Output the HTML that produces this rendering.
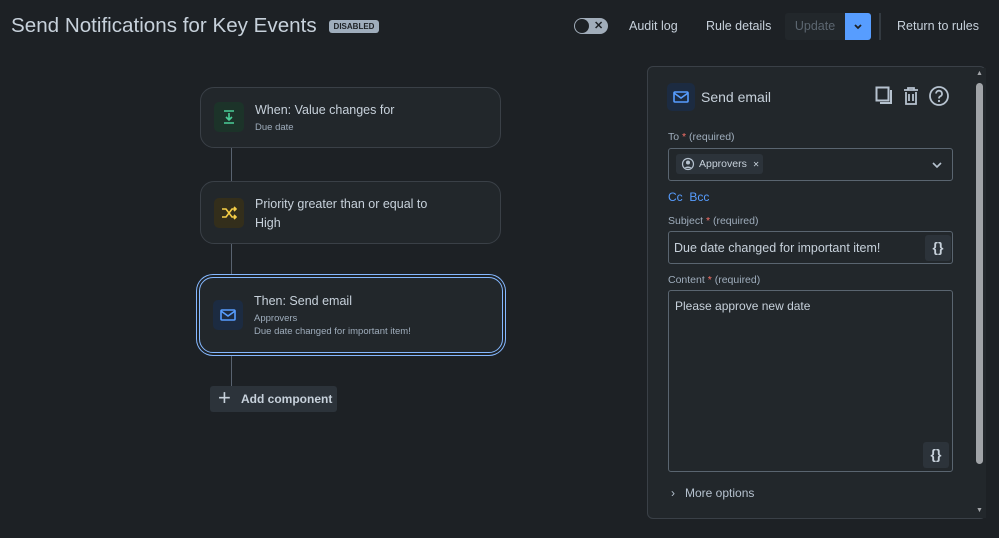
<!DOCTYPE html><html><head><style>
*{box-sizing:border-box;margin:0;padding:0}
body{width:999px;height:538px;background:#1d2125;font-family:"Liberation Sans",sans-serif;color:#b6c2cf;position:relative;overflow:hidden}
.a{position:absolute;white-space:nowrap}
.card{position:absolute;left:200px;width:301px;border:1px solid #3a4047;border-radius:14px;background:#22272b}
.ic{position:absolute;left:13px;width:30px;height:30px;border-radius:5px}
.t{position:absolute;left:54px;font-size:12.5px;color:#c7d1db;white-space:nowrap}
.s{position:absolute;left:54px;font-size:9.5px;color:#9fadbc;white-space:nowrap}
.lbl{position:absolute;left:668px;font-size:10.5px;color:#9fadbc}
.lbl b{color:#f87168;font-weight:normal}
.lbl span{color:#9fadbc}
.box{position:absolute;left:668px;width:285px;border:1px solid #5a6570;border-radius:3px;background:#22272b}
.br{position:absolute;width:26px;height:26px;background:#2c333a;border-radius:3px;color:#c7d1db;font-size:14px;text-align:center;line-height:25px;font-weight:bold}
</style></head><body>
<div class="a" style="left:11px;top:14px;font-size:20.6px;color:#c7d1db">Send Notifications for Key Events</div>
<div class="a" style="left:329px;top:20px;width:50px;height:13px;background:#9fadbc;border-radius:3px;color:#1d2125;font-size:8px;font-weight:bold;text-align:center;line-height:13px">DISABLED</div>
<div class="a" style="left:574px;top:18px;width:34px;height:16px;border-radius:8px;background:#a1adba"><div class="a" style="left:1px;top:1px;width:14px;height:14px;border-radius:7px;background:#1d2125"></div><div class="a" style="left:20px;top:0;font-size:11px;color:#1d2125;font-weight:bold;line-height:16px">✕</div></div>
<div class="a" style="left:629px;top:19px;font-size:12.5px;color:#c7d1db">Audit log</div>
<div class="a" style="left:706px;top:19px;font-size:12.5px;color:#c7d1db">Rule details</div>
<div class="a" style="left:785px;top:13px;width:60px;height:27px;background:#22272b;border-radius:3px 0 0 3px;color:#5c6670;font-size:12.5px;text-align:center;line-height:27px">Update</div>
<div class="a" style="left:845px;top:13px;width:26px;height:27px;background:#579dff;border-radius:0 3px 3px 0"><svg width="26" height="27"><path d="M10 12l3 3 3-3" stroke="#1d2125" stroke-width="1.8" fill="none"/></svg></div>
<div class="a" style="left:879px;top:13px;width:2px;height:27px;background:#333a41"></div>
<div class="a" style="left:897px;top:19px;font-size:12.5px;color:#c7d1db">Return to rules</div>

<div class="a" style="left:231px;top:147px;width:1px;height:240px;background:#596370"></div>
<div class="card" style="top:87px;height:61px"><div class="ic" style="top:14px;background:#1c3329"><svg width="30" height="30"><path d="M10 9h10M15 11v7M12 15l3 3 3-3M10 21h10" stroke="#4bce97" stroke-width="1.6" fill="none"/></svg></div><div class="t" style="top:15px">When: Value changes for</div><div class="s" style="top:34px">Due date</div></div>
<div class="card" style="top:181px;height:63px"><div class="ic" style="top:16px;background:#332e1b"><svg width="30" height="30"><path d="M8 11h4l6 8h4M8 19h4l6-8h4M20 9l2 2-2 2M20 17l2 2-2 2" stroke="#f5cd47" stroke-width="1.6" fill="none"/></svg></div><div class="t" style="top:15px">Priority greater than or equal to</div><div class="t" style="top:34px">High</div></div>
<div class="card" style="top:277px;left:199px;width:304px;height:76px;border:1px solid #85b8ff;box-shadow:0 0 0 2px #1d2125,0 0 0 3px #85b8ff;border-radius:14px"><div class="ic" style="top:22px;background:#1c2b41"><svg width="30" height="30"><rect x="8" y="10" width="14" height="10" rx="1" stroke="#579dff" stroke-width="1.6" fill="none"/><path d="M8 11l7 5 7-5" stroke="#579dff" stroke-width="1.6" fill="none"/></svg></div><div class="t" style="top:16px">Then: Send email</div><div class="s" style="top:35px">Approvers</div><div class="s" style="top:48px">Due date changed for important item!</div></div>
<div class="a" style="left:210px;top:386px;width:127px;height:26px;background:#2c333a;border-radius:3px;font-size:12px;color:#c7d1db;font-weight:bold;line-height:26px;padding-left:31px">Add component<span class="a" style="left:8px;top:-1px;font-size:22px;font-weight:normal">+</span></div>

<div class="a" style="left:647px;top:66px;width:339px;height:453px;border:1px solid #3a4047;border-radius:6px;background:#22272b"></div>
<div class="a" style="left:974px;top:68px;width:12px;height:450px;background:#22272b"></div>
<div class="a" style="left:976px;top:83px;width:7px;height:381px;background:#a1a4a8;border-radius:4px"></div>
<div class="a" style="left:976px;top:70px;font-size:7px;color:#a1a4a8">▲</div>
<div class="a" style="left:976px;top:507px;font-size:7px;color:#a1a4a8">▼</div>
<div class="a" style="left:667px;top:83px;width:28px;height:28px;border-radius:5px;background:#1c2b41"><svg width="28" height="28"><rect x="7" y="9" width="14" height="10" rx="1" stroke="#579dff" stroke-width="1.6" fill="none"/><path d="M7 10l7 5 7-5" stroke="#579dff" stroke-width="1.6" fill="none"/></svg></div>
<div class="a" style="left:701px;top:89px;font-size:14px;color:#c7d1db">Send email</div>
<svg class="a" style="left:874px;top:84px" width="80" height="26"><rect x="2.5" y="3.5" width="12" height="13" fill="none" stroke="#b6c2cf" stroke-width="2"/><path d="M17 6v13H6" stroke="#b6c2cf" stroke-width="2" fill="none"/><path d="M30 6h14M34 6V4h6v2M32 8v12h10V8M35 10v7M39 10v7" stroke="#b6c2cf" stroke-width="1.8" fill="none"/><circle cx="65" cy="12" r="9" stroke="#b6c2cf" stroke-width="1.8" fill="none"/><path d="M62 9.5a3 3 0 1 1 4 3c-1 .5-1 1-1 2" stroke="#b6c2cf" stroke-width="1.8" fill="none"/><circle cx="65" cy="17" r="1.1" fill="#b6c2cf"/></svg>
<div class="lbl" style="top:131px">To <b>*</b> <span>(required)</span></div>
<div class="box" style="top:148px;height:33px"><div class="a" style="left:7px;top:5px;width:87px;height:20px;background:#2c333a;border-radius:3px;font-size:10.5px;color:#c7d1db;line-height:20px;padding-left:23px">Approvers <span style="font-size:8px;margin-left:3px">✕</span><svg class="a" style="left:5px;top:3px" width="14" height="14"><circle cx="7" cy="7" r="5.5" stroke="#b6c2cf" stroke-width="1.2" fill="none"/><circle cx="7" cy="5.5" r="2" fill="#b6c2cf"/><path d="M3.5 11a4 3 0 0 1 7 0" fill="#b6c2cf"/></svg></div><svg class="a" style="right:10px;top:12px" width="10" height="8"><path d="M1 2l4 4 4-4" stroke="#b6c2cf" stroke-width="1.6" fill="none"/></svg></div>
<div class="a" style="left:668px;top:190px;font-size:12px;color:#579dff">Cc&nbsp; Bcc</div>
<div class="lbl" style="top:215px">Subject <b>*</b> <span>(required)</span></div>
<div class="box" style="top:231px;height:33px"><div class="a" style="left:5px;top:9px;font-size:12.5px;color:#c7d1db">Due date changed for important item!</div><div class="br" style="left:256px;top:3px">{}</div></div>
<div class="lbl" style="top:274px">Content <b>*</b> <span>(required)</span></div>
<div class="box" style="top:290px;height:182px"><div class="a" style="left:6px;top:8px;font-size:12px;color:#c7d1db">Please approve new date</div><div class="br" style="left:254px;top:151px">{}</div></div>
<div class="a" style="left:671px;top:486px;font-size:12px;color:#b6c2cf">›&nbsp;&nbsp; More options</div>
</body></html>
